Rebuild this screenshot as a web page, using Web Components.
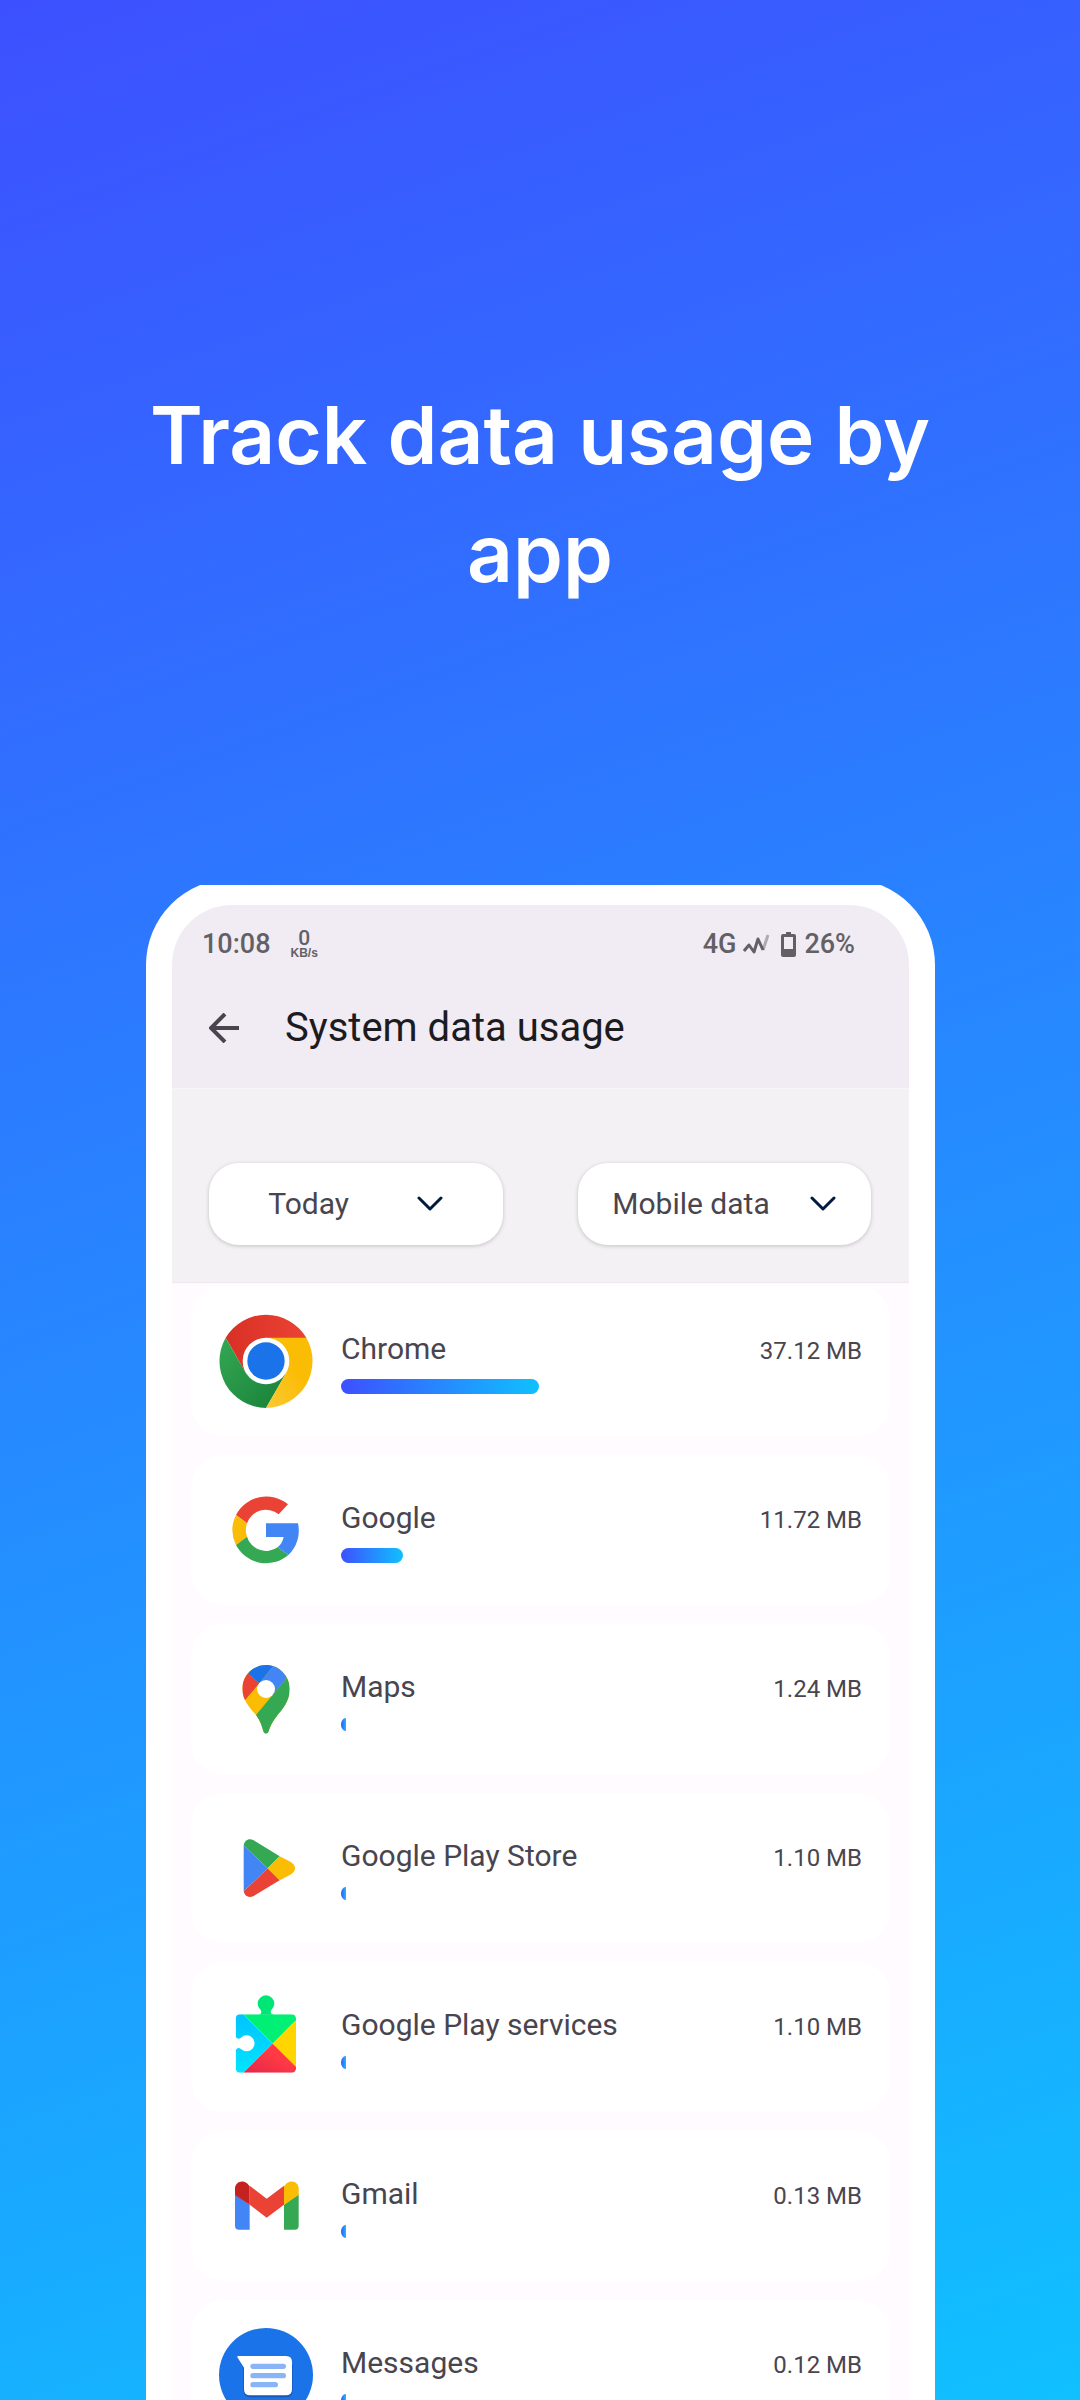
<!DOCTYPE html>
<html lang="en">
<head>
<meta charset="utf-8">
<meta name="viewport" content="width=device-width, initial-scale=1">
<title>Track data usage by app</title>
<style>
  body {
    margin: 0;
    font-family: Roboto, "Liberation Sans", sans-serif;
  }
</style>
</head>
<body>
<promo-page>
  <span slot="title">Track data usage by app</span>
  <phone-frame>
    <status-bar time="10:08" speed="0" network="4G" battery="26%"></status-bar>
    <app-bar>System data usage</app-bar>
    <filter-bar>
      <filter-select label="Period" value="Today" style="--gap: 68px"></filter-select>
      <filter-select label="Connection" value="Mobile data" style="--gap: 40px"></filter-select>
    </filter-bar>
    <usage-list>
      <usage-row icon="chrome" size="37.12 MB" bar="198">Chrome</usage-row>
      <usage-row icon="google" size="11.72 MB" bar="62">Google</usage-row>
      <usage-row icon="maps" size="1.24 MB" bar="5">Maps</usage-row>
      <usage-row icon="play" size="1.10 MB" bar="5">Google Play Store</usage-row>
      <usage-row icon="services" size="1.10 MB" bar="5">Google Play services</usage-row>
      <usage-row icon="gmail" size="0.13 MB" bar="5">Gmail</usage-row>
      <usage-row icon="messages" size="0.12 MB" bar="5">Messages</usage-row>
    </usage-list>
  </phone-frame>
</promo-page>

<script>
class PromoPage extends HTMLElement {
  constructor () {
    super()
    this.shadowDOM = this.attachShadow({ mode: 'open' })
  }

  connectedCallback () {
    this.shadowDOM.innerHTML = `
      <style>
        :host {
          display: flex;
          flex-direction: column;
          height: 100vh;
          overflow: hidden;
          background: linear-gradient(160deg, #3d50ff, #10c0ff);
        }
        h1 {
          flex: none;
          margin: 0;
          padding: 376px 140px 267px;
          color: #fff;
          font: 600 80px/118px Inter, sans-serif;
          text-align: center;
        }
        main {
          flex: none;
          padding: 0 145px 0 146px;
        }
      </style>
      <h1><slot name="title"></slot></h1>
      <main><slot></slot></main>
    `
  }
}

class PhoneFrame extends HTMLElement {
  constructor () {
    super()
    this.shadowDOM = this.attachShadow({ mode: 'open' })
  }

  connectedCallback () {
    // the top of the bezel is cut flat
    this.shadowDOM.innerHTML = `
      <style>
        :host {
          display: block;
          padding: 26px;
          border-radius: 86px;
          background: #fff;
          clip-path: inset(6px 0 0 0);
        }
        .screen {
          border-radius: 60px;
          overflow: hidden;
          background: #fffbff;
        }
      </style>
      <div class="screen"><slot></slot></div>
    `
  }
}

class StatusBar extends HTMLElement {
  constructor () {
    super()
    this.shadowDOM = this.attachShadow({ mode: 'open' })
  }

  connectedCallback () {
    this.shadowDOM.innerHTML = `
      <style>
        :host {
          display: flex;
          align-items: center;
          height: 78px;
          padding: 0 54px 0 30px;
          background: #f1ecf3;
          color: #636065;
          font-size: 27px;
          line-height: 32px;
          font-weight: 500;
        }
        .speed {
          display: flex;
          flex-direction: column;
          align-items: center;
          margin-left: 20px;
          font-size: 12px;
          line-height: 12px;
          font-weight: 700;
          font-family: "Liberation Sans", sans-serif;
        }
        .speed b {
          font: 500 21px/18px Roboto, sans-serif;
        }
        .right {
          display: flex;
          align-items: center;
          margin-left: auto;
        }
        .signal {
          margin: 0 12px 0 7px;
        }
        .battery {
          margin-right: 8px;
        }
      </style>
      <span>${this.getAttribute('time')}</span>
      <span class="speed"><b>${this.getAttribute('speed')}</b>KB/s</span>
      <div class="right">
        <span>${this.getAttribute('network')}</span>
        <svg class="signal" width="26" height="22" viewBox="0 0 26 22" fill="none" stroke="#636065" stroke-width="3" stroke-linejoin="round">
          <path d="M20 17 25 2" stroke="#aeaab0"/>
          <path d="M1 18 6 12 11 19 15 6 20 17"/>
        </svg>
        <svg class="battery" width="15" height="25" viewBox="0 0 15 25">
          <path fill="#636065" fill-rule="evenodd" d="M5 0h5v2h3q2 0 2 2v19q0 2-2 2H2q-2 0-2-2V4q0-2 2-2h3zM3 5v12h9V5z"/>
        </svg>
        <span>${this.getAttribute('battery')}</span>
      </div>
    `
  }
}

class AppBar extends HTMLElement {
  constructor () {
    super()
    this.shadowDOM = this.attachShadow({ mode: 'open' })
  }

  connectedCallback () {
    this.shadowDOM.innerHTML = `
      <style>
        :host {
          display: flex;
          align-items: center;
          padding: 20px 30px 36px;
          background: #f1ecf3;
        }
        button {
          display: flex;
          margin: 0 38px 0 0;
          padding: 0 7px;
          border: 0;
          background: none;
        }
        h2 {
          margin: 0;
          color: #1c1b1f;
          font-size: 40px;
          line-height: 49px;
          font-weight: 400;
        }
      </style>
      <button aria-label="Back">
        <svg width="31" height="30" viewBox="0 0 31 30" fill="none" stroke="#49454f" stroke-width="4">
          <path d="M30 15H3M16 1 2 15l14 14"/>
        </svg>
      </button>
      <h2><slot></slot></h2>
    `
  }
}

class FilterBar extends HTMLElement {
  constructor () {
    super()
    this.shadowDOM = this.attachShadow({ mode: 'open' })
  }

  connectedCallback () {
    this.shadowDOM.innerHTML = `
      <style>
        :host {
          display: flex;
          gap: 75px;
          padding: 74px 38px 37px 37px;
          border-top: 1px solid #f7f5f8;
          background: #f3f1f4;
          box-shadow: 0 1px 1px #eee9ef;
        }
        ::slotted(*) {
          flex: 1;
        }
      </style>
      <slot></slot>
    `
  }
}

class FilterSelect extends HTMLElement {
  constructor () {
    super()
    this.shadowDOM = this.attachShadow({ mode: 'open' })
  }

  get value () {
    return this.shadowDOM.querySelector('select').value
  }

  connectedCallback () {
    this.shadowDOM.innerHTML = `
      <style>
        :host {
          display: block;
        }
        label {
          display: flex;
          align-items: center;
          justify-content: center;
          gap: var(--gap);
          height: 82px;
          border-radius: 30px;
          background: #fff;
          box-shadow: 0 1px 4px rgba(0, 0, 0, .2);
        }
        select {
          appearance: none;
          margin: 0;
          padding: 0;
          border: 0;
          background: none;
          color: #49454f;
          font: 400 30px/36px Roboto, sans-serif;
        }
      </style>
      <label>
        <select aria-label="${this.getAttribute('label')}">
          <option>${this.getAttribute('value')}</option>
        </select>
        <svg width="26" height="16" viewBox="0 0 26 16" fill="none" stroke="#001b3d" stroke-width="3" stroke-linecap="round" stroke-linejoin="round">
          <path d="M2 2l11 11L24 2"/>
        </svg>
      </label>
    `
  }
}

class UsageList extends HTMLElement {
  constructor () {
    super()
    this.shadowDOM = this.attachShadow({ mode: 'open' })
  }

  connectedCallback () {
    this.setAttribute('role', 'list')
    this.shadowDOM.innerHTML = `
      <style>
        :host {
          display: flex;
          flex-direction: column;
          gap: 19px;
          padding: 4px 19px 19px;
        }
      </style>
      <slot></slot>
    `
  }
}

class UsageRow extends HTMLElement {
  constructor () {
    super()
    this.shadowDOM = this.attachShadow({ mode: 'open' })
  }

  connectedCallback () {
    const bar = Number(this.getAttribute('bar'))
    this.setAttribute('role', 'listitem')
    this.shadowDOM.innerHTML = `
      <style>
        :host {
          display: flex;
          gap: 28px;
          padding: 28px;
          border-radius: 32px;
          background: #fff;
          color: #49454f;
        }
        .body {
          flex: 1;
          padding-top: 17px;
        }
        .line {
          display: flex;
          align-items: baseline;
          justify-content: space-between;
          font-size: 30px;
          line-height: 36px;
        }
        .size {
          font-size: 24px;
        }
        .bar {
          width: ${bar}px;
          height: 15px;
          margin-top: 10px;
          border-radius: 8px;
          background: linear-gradient(90deg, #3d50ff, #10c0ff);
        }
        .bar.tiny {
          height: 13px;
          margin-top: 11px;
          border-radius: 5px 0 0 5px / 7px 0 0 7px;
        }
      </style>
      <app-icon name="${this.getAttribute('icon')}"></app-icon>
      <div class="body">
        <div class="line">
          <span><slot></slot></span>
          <span class="size">${this.getAttribute('size')}</span>
        </div>
        <div class="bar ${bar < 15 ? 'tiny' : ''}"></div>
      </div>
    `
  }
}

const icons = {
  chrome: `
    <defs>
      <linearGradient id="r"><stop stop-color="#d93025"/><stop offset="1" stop-color="#ea4335"/></linearGradient>
      <linearGradient id="g" x1="0" y1="0" x2="1" y2="1"><stop stop-color="#34a853"/><stop offset="1" stop-color="#188038"/></linearGradient>
      <linearGradient id="y" x1="1" y1="0" x2="0" y2="1"><stop offset=".4" stop-color="#fbbc04"/><stop offset="1" stop-color="#fcc934"/></linearGradient>
    </defs>
    <path fill="url(#r)" d="M20 71A141 141 0 0 1 262 71L240 90H141L80 176Z"/>
    <path fill="url(#g)" d="M20 71A141 141 0 0 0 141 282L202 176H80Z"/>
    <path fill="url(#y)" d="M262 71A141 141 0 0 1 141 282L202 176 141 71Z"/>
    <circle cx="141" cy="141" r="70" fill="#fff"/>
    <circle cx="141" cy="141" r="56" fill="#1a73e8"/>`,
  google: `
    <path fill="#ea4335" d="M51 96A102 102 0 0 1 207 64L179 94A60 60 0 0 0 84 121Z"/>
    <path fill="#fbbc05" d="M51 96A102 102 0 0 0 51 186L84 161A60 60 0 0 1 84 121Z"/>
    <path fill="#34a853" d="M51 186A102 102 0 0 0 208 216L176 193A60 60 0 0 1 84 161Z"/>
    <path fill="#4285f4" d="M208 216A101 101 0 0 0 237 121H141V162H194A54 54 0 0 1 176 193Z"/>`,
  maps: `
    <clipPath id="pin"><path d="M141 39C180 39 212 71 212 110C212 150 190 170 172 194C158 212 153 225 149 238Q147 245 141 245Q135 245 133 238C129 223 124 206 111 189C95 170 70 145 70 110C70 71 102 39 141 39Z"/></clipPath>
    <g clip-path="url(#pin)">
      <path fill="#fbbc04" d="M60 30h160v220H60z"/>
      <path fill="#ea4335" d="M88 65L121 94 79 143 50 165V30Z"/>
      <path fill="#1a73e8" d="M88 65L121 94 163 42V20H60V42Z"/>
      <path fill="#4285f4" d="M163 42L121 94 161 129 203 79 230 30H166Z"/>
      <path fill="#34a853" d="M203 79L111 189 120 260H250V23Z"/>
    </g>
    <circle cx="141" cy="111" r="27" fill="#fff"/>`,
  play: `
    <path fill="#4285f4" d="M74 73L146 142 74 211Z"/>
    <path fill="#34a853" d="M74 73C77 57 90 50 104 58L182 106 146 142Z"/>
    <path fill="#ea4335" d="M74 211C77 227 90 232 104 225L182 178 146 142Z"/>
    <path fill="#fbbc04" d="M182 106L214 122Q228 130 228 142T214 161L182 178 146 142Z"/>`,
  services: `
    <defs>
      <linearGradient id="c" x1="0" y1="0" x2="0" y2="1"><stop stop-color="#00c3ff"/><stop offset="1" stop-color="#00e5ff"/></linearGradient>
      <linearGradient id="k" x1="0" y1="1" x2="1" y2="0"><stop stop-color="#e2264d"/><stop offset=".6" stop-color="#ff3a44"/></linearGradient>
      <clipPath id="body"><rect x="50" y="73" width="181" height="175" rx="13"/></clipPath>
    </defs>
    <path fill="#00e676" d="M117 74Q127 74 127 65L125 60A25 25 0 1 1 157 60L155 65Q156 74 166 74Z"/>
    <g clip-path="url(#body)">
      <path fill="url(#c)" d="M50 73H73L161 161 73 248H50Z"/>
      <path fill="#00f076" d="M73 73H231V91L161 161Z"/>
      <path fill="#ffd500" d="M231 91V230L161 161Z"/>
      <path fill="url(#k)" d="M73 248H231V230L161 161Z"/>
    </g>
    <path fill="#fff" d="M49 134Q50 146 60 146L66 143A24 24 0 1 1 66 177L60 174Q50 175 49 186Z"/>`,
  gmail: `
    <path fill="#4285f4" d="M48 106L92 137V212H60Q48 212 48 200Z"/>
    <path fill="#34a853" d="M239 106L195 137V212H227Q239 212 239 200Z"/>
    <path fill="#c5221f" d="M48 108V89C48 70 69 61 84 73L92 82V137Z"/>
    <path fill="#fbbc04" d="M239 108V89C239 70 218 61 203 73L195 82V137Z"/>
    <path fill="#ea4335" d="M92 80L143 119 195 80V137L143 176 92 137Z"/>`,
  messages: `
    <circle cx="141" cy="141" r="141" fill="#1a73e8"/>
    <path fill="#1558b8" d="M55 86L73 120V188Q76 208 96 208H202Q221 206 221 188V110Z"/>
    <path fill="#fff" d="M58 84H201Q219 84 219 102V184Q219 202 201 202H93Q75 202 75 184V119L55 88Q54 84 58 84Z"/>
    <path stroke="#8ab4f8" stroke-width="16" stroke-linecap="round" d="M102 115H193M102 143H193M102 170H169"/>`
}

class AppIcon extends HTMLElement {
  constructor () {
    super()
    this.shadowDOM = this.attachShadow({ mode: 'open' })
  }

  connectedCallback () {
    this.shadowDOM.innerHTML = `
      <style>
        :host {
          display: block;
          flex: none;
          width: 94px;
          height: 94px;
        }
        svg {
          display: block;
          width: 100%;
        }
      </style>
      <svg viewBox="0 0 282 282" aria-hidden="true">${icons[this.getAttribute('name')]}</svg>
    `
  }
}

customElements.define('promo-page', PromoPage)
customElements.define('phone-frame', PhoneFrame)
customElements.define('status-bar', StatusBar)
customElements.define('app-bar', AppBar)
customElements.define('filter-bar', FilterBar)
customElements.define('filter-select', FilterSelect)
customElements.define('usage-list', UsageList)
customElements.define('app-icon', AppIcon)
customElements.define('usage-row', UsageRow)
</script>
</body>
</html>
